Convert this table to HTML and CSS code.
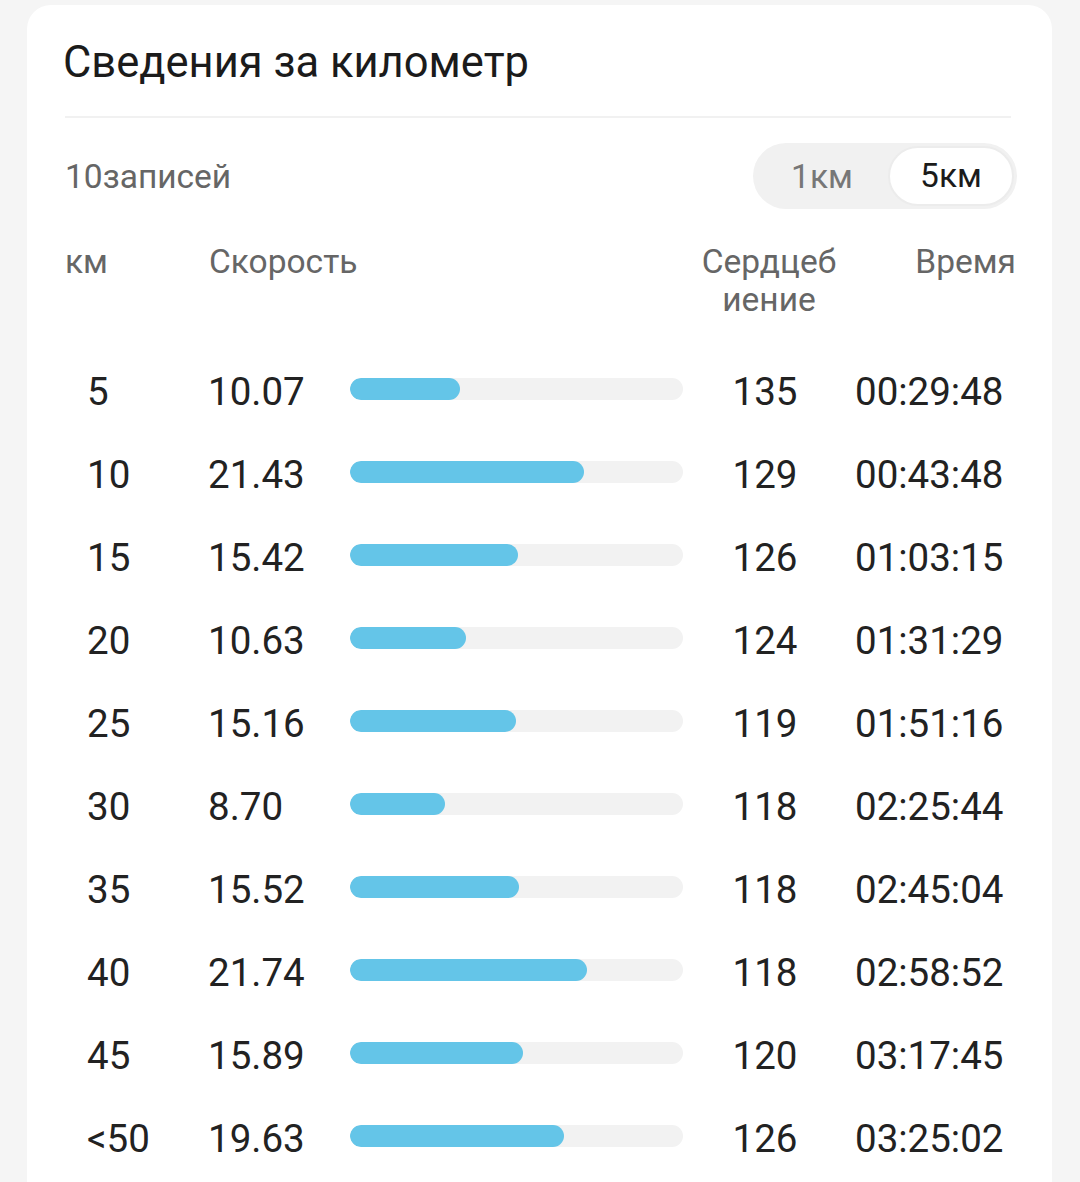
FILE: index.html
```html
<!DOCTYPE html>
<html lang="ru">
<head>
<meta charset="utf-8">
<title>Сведения за километр</title>
<link rel="stylesheet" href="styles.css">
</head>
<body>
<div class="card">
  <h1 class="title">Сведения за километр</h1>
  <div class="divider"></div>
  <div class="toolbar">
    <span class="count">10записей</span>
    <div class="toggle">
      <span class="seg">1км</span>
      <span class="seg active">5км</span>
    </div>
  </div>
  <div class="table">
    <div class="th th-km">км</div>
    <div class="th th-speed">Скорость</div>
    <div class="th th-hr">Сердцеб<br>иение</div>
    <div class="th th-time">Время</div>

    <div class="td km">5</div><div class="td speed">10.07</div><div class="bar"><div class="fill" style="width:33%"></div></div><div class="td hr">135</div><div class="td time">00:29:48</div>
    <div class="td km">10</div><div class="td speed">21.43</div><div class="bar"><div class="fill" style="width:70.3%"></div></div><div class="td hr">129</div><div class="td time">00:43:48</div>
    <div class="td km">15</div><div class="td speed">15.42</div><div class="bar"><div class="fill" style="width:50.5%"></div></div><div class="td hr">126</div><div class="td time">01:03:15</div>
    <div class="td km">20</div><div class="td speed">10.63</div><div class="bar"><div class="fill" style="width:34.9%"></div></div><div class="td hr">124</div><div class="td time">01:31:29</div>
    <div class="td km">25</div><div class="td speed">15.16</div><div class="bar"><div class="fill" style="width:49.7%"></div></div><div class="td hr">119</div><div class="td time">01:51:16</div>
    <div class="td km">30</div><div class="td speed">8.70</div><div class="bar"><div class="fill" style="width:28.5%"></div></div><div class="td hr">118</div><div class="td time">02:25:44</div>
    <div class="td km">35</div><div class="td speed">15.52</div><div class="bar"><div class="fill" style="width:50.9%"></div></div><div class="td hr">118</div><div class="td time">02:45:04</div>
    <div class="td km">40</div><div class="td speed">21.74</div><div class="bar"><div class="fill" style="width:71.3%"></div></div><div class="td hr">118</div><div class="td time">02:58:52</div>
    <div class="td km">45</div><div class="td speed">15.89</div><div class="bar"><div class="fill" style="width:52.1%"></div></div><div class="td hr">120</div><div class="td time">03:17:45</div>
    <div class="td km">&lt;50</div><div class="td speed">19.63</div><div class="bar"><div class="fill" style="width:64.4%"></div></div><div class="td hr">126</div><div class="td time">03:25:02</div>
  </div>
</div>
</body>
</html>
```

FILE: styles.css
```css
html, body {
  margin: 0;
  padding: 0;
  background: #f5f5f5;
  font-family: Roboto, "Noto Sans", "Liberation Sans", sans-serif;
  height: 1182px;
  overflow: hidden;
}

.card {
  margin: 5px 0 0 27px;
  width: 1025px;
  box-sizing: border-box;
  background: #ffffff;
  border-radius: 24px 24px 0 0;
  padding: 28px 36px 40px 38px;
}

.title {
  margin: 0 0 0 -2px;
  font-size: 43.5px;
  line-height: 60px;
  font-weight: 400;
  color: #1b1b1b;
}

.divider {
  height: 2px;
  background: #f1f1f1;
  margin: 23px 5px 0 0;
}

.toolbar {
  display: flex;
  justify-content: space-between;
  align-items: center;
  margin-top: 25px;
  margin-right: -1px;
}

.count {
  font-size: 33.5px;
  color: #666666;
}

.toggle {
  display: flex;
  align-items: center;
  width: 264px;
  height: 66px;
  box-sizing: border-box;
  padding: 3px;
  background: #f1f1f1;
  border-radius: 33px;
}

.seg {
  font-size: 33.5px;
  color: #777777;
  text-align: center;
}

.seg:first-child {
  flex: 0 0 132px;
}

.seg.active {
  flex: 1 1 0;
  height: 60px;
  line-height: 56px;
  box-sizing: border-box;
  background: #ffffff;
  border: 2px solid #ececec;
  border-radius: 30px;
  color: #1b1b1b;
}

.table {
  display: grid;
  grid-template-columns: 143px 142px 333px 172px 161px;
  grid-template-rows: 107px;
  grid-auto-rows: 83px;
  align-items: center;
  margin-top: 34px;
}

.th {
  font-size: 33.5px;
  line-height: 38px;
  color: #666666;
  align-self: start;
}

.th-speed {
  grid-column: 2 / 4;
  padding-left: 1px;
}

.th-hr {
  text-align: center;
}

.th-time {
  text-align: right;
}

.td {
  font-size: 38.5px;
  color: #222222;
}

.td.km {
  padding-left: 22px;
}

.td.hr {
  text-align: center;
  padding-right: 8px;
}

.bar {
  height: 22px;
  margin-bottom: 6px;
  background: #f2f2f2;
  border-radius: 11px;
  overflow: hidden;
}

.fill {
  height: 100%;
  background: #64c5e8;
  border-radius: 11px;
}
```
